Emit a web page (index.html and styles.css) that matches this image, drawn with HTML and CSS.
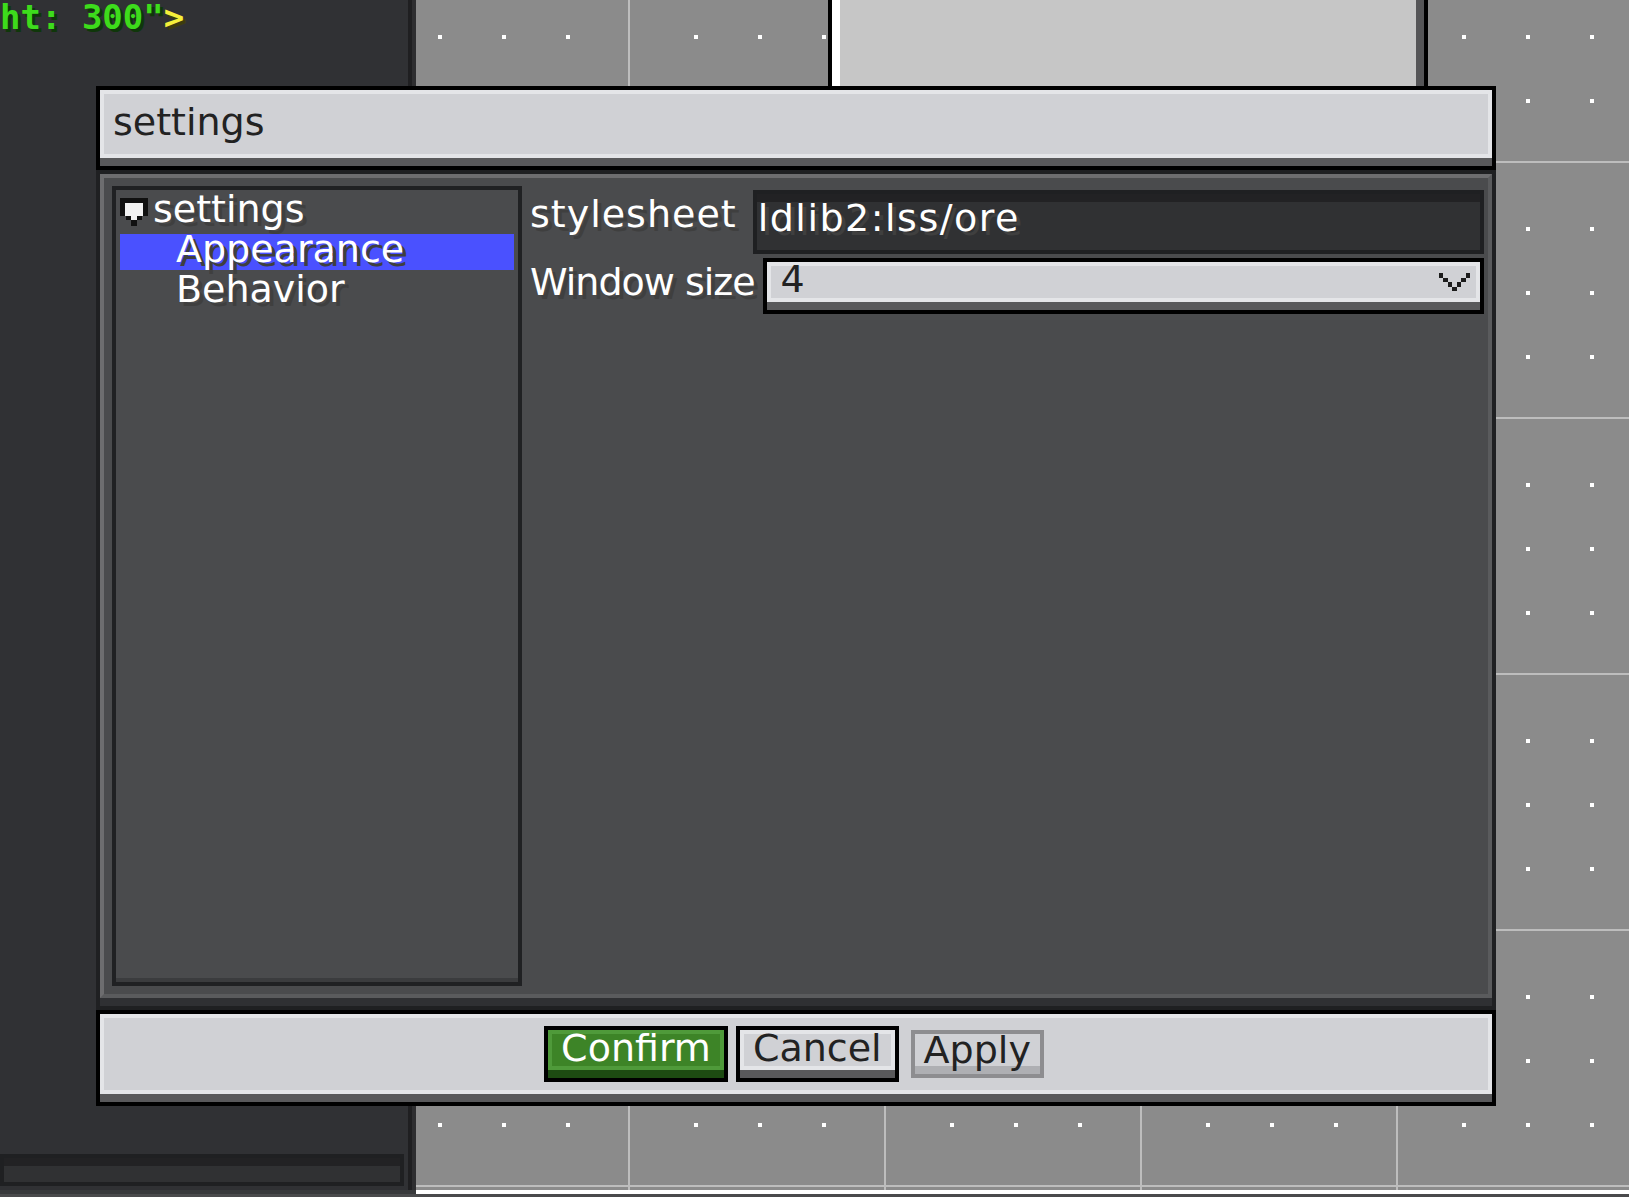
FILE: index.html
```html
<!DOCTYPE html>
<html lang="en">
  <head>
    <meta charset="UTF-8" />
    <meta name="viewport" content="width=device-width, initial-scale=1.0" />
    <title>settings</title>
    <link rel="stylesheet" href="styles.css">
  </head>
  <body>
    <div class="app">
      <div class="main">
        <div class="editor">
          <div class="code-line"><span class="code-str">ht: 300"</span><span class="code-tag">&gt;</span></div>
          <div class="field editor-input"></div>
        </div>
        <div class="canvas">
          <div class="canvas-panel"></div>
        </div>
      </div>
      <div class="status">
        <div class="status-left"></div>
        <div class="status-right"></div>
      </div>

      <div class="dialog">
        <div class="raised dialog-title">
          <div class="face">settings</div>
        </div>

        <div class="dialog-body">
          <div class="body-face">
            <div class="tree">
              <div class="tree-row">
                <svg class="toggle" width="28" height="28" viewBox="0 0 28 28" shape-rendering="crispEdges">
                  <rect x="0" y="0" width="28" height="18" fill="#111" />
                  <rect x="5" y="5" width="18" height="13" fill="#f2f2f2" />
                  <rect x="6" y="18" width="16" height="4" fill="#111" />
                  <rect x="11" y="18" width="6" height="4" fill="#f2f2f2" />
                  <rect x="11" y="22" width="6" height="6" fill="#111" />
                </svg>
                <span class="label">settings</span>
              </div>
              <div class="tree-row child selected"><span class="label">Appearance</span></div>
              <div class="tree-row child"><span class="label">Behavior</span></div>
            </div>

            <div class="props">
              <div class="prop-row">
                <span class="label prop-label">stylesheet</span>
                <div class="field prop-field">ldlib2:lss/ore</div>
              </div>
              <div class="prop-row">
                <span class="label prop-label narrow">Window size</span>
                <div class="raised select">
                  <div class="face">
                    <span>4</span>
                    <svg class="chevron" width="31" height="18" viewBox="0 0 7 4" preserveAspectRatio="none" shape-rendering="crispEdges">
                      <rect x="0" y="0" width="1" height="1" fill="#1c1c1c" />
                      <rect x="6" y="0" width="1" height="1" fill="#1c1c1c" />
                      <rect x="1" y="1" width="1" height="1" fill="#1c1c1c" />
                      <rect x="5" y="1" width="1" height="1" fill="#1c1c1c" />
                      <rect x="2" y="2" width="1" height="1" fill="#1c1c1c" />
                      <rect x="4" y="2" width="1" height="1" fill="#1c1c1c" />
                      <rect x="3" y="3" width="1" height="1" fill="#1c1c1c" />
                    </svg>
                  </div>
                </div>
              </div>
            </div>
          </div>
        </div>

        <div class="raised dialog-footer">
          <div class="face">
            <div class="btn btn-confirm"><div class="btn-face">Confirm</div></div>
            <div class="btn"><div class="btn-face">Cancel</div></div>
            <div class="btn btn-disabled"><div class="btn-face">Apply</div></div>
          </div>
        </div>
      </div>
    </div>
  </body>
</html>
```

FILE: styles.css
```css
* {
  box-sizing: border-box;
}
body {
  margin: 0;
  width: 1629px;
  height: 1197px;
  overflow: hidden;
  background-color: #303134;
  font-family: "DejaVu Sans", sans-serif;
}
.app {
  position: relative;
  display: flex;
  flex-direction: column;
  height: 1197px;
}
.main {
  display: flex;
  height: 1190px;
}

/* code editor on the left */
.editor {
  width: 416px;
  display: flex;
  flex-direction: column;
  justify-content: space-between;
  background-color: #303134;
  border-right: 4px solid #2e2e30;
  box-shadow: inset -4px 0 #1f1f21;
}
.code-line {
  font-family: "DejaVu Sans Mono", monospace;
  font-weight: bold;
  font-size: 34px;
  line-height: 34px;
  white-space: pre;
}
.code-str {
  color: #3ddc1c;
  text-shadow: 3px 3px 0 #0f370a;
}
.code-tag {
  color: #f5f03a;
  text-shadow: 3px 3px 0 #3d3c0e;
}
.editor-input {
  height: 32px;
  margin: 0 8px 4px 0;
}

/* grid canvas */
.canvas {
  flex: 1;
  position: relative;
  background-color: #8b8b8b;
  background-image:
    linear-gradient(90deg, #bdbdbd 2px, transparent 0),
    linear-gradient(180deg, #bdbdbd 2px, transparent 0),
    linear-gradient(90deg, #8b8b8b 8px, transparent 0),
    linear-gradient(180deg, #8b8b8b 8px, transparent 0),
    conic-gradient(from 270deg at 4px 4px, #fff 25%, transparent 0);
  background-size: 256px 256px, 256px 256px, 256px 256px, 256px 256px, 64px 64px;
  background-position: 212px 0, 0 161px, 212px 0, 0 161px, 22px 35px;
}
.canvas-panel {
  position: absolute;
  left: 412px;
  top: -20px;
  width: 600px;
  height: 500px;
  border: 4px solid #000;
  background-color: #c6c6c6;
  box-shadow: inset 8px 0 #fff, inset -8px 0 #555557;
}
.status {
  display: flex;
  height: 7px;
  background-color: #4a4a4c;
}
.status-left {
  width: 416px;
  height: 4px;
  background-color: #38393b;
}
.status-right {
  flex: 1;
  height: 4px;
  background-color: #fff;
}

/* shared widgets */
.raised {
  border: 4px solid #000;
  background-color: #59595b;
  padding-bottom: 8px;
}
.raised > .face {
  height: 100%;
  border: 4px solid #e4e5e8;
  background-color: #d0d1d5;
  color: #222;
}
.field {
  border: 4px solid #1f2022;
  background-color: #303133;
  box-shadow: inset 0 8px #222224;
}
.label {
  color: #fff;
  text-shadow: 4px 4px 0 #3f3f3f;
  white-space: pre;
}

/* dialog */
.dialog {
  position: absolute;
  left: 96px;
  top: 86px;
  width: 1400px;
  display: flex;
  flex-direction: column;
  font-size: 38px;
}
.dialog-title {
  height: 84px;
}
.dialog-title > .face {
  padding-left: 9px;
  line-height: 56px;
}
.dialog-body {
  height: 840px;
  border: 4px solid #1f2022;
  background-color: #2f3033;
  padding-bottom: 8px;
}
.body-face {
  display: flex;
  height: 100%;
  border: 4px solid;
  border-color: #6d6d6f #5a5b5d #5a5b5d #6d6d6f;
  background-color: #4a4b4d;
  padding: 8px 0 8px 8px;
}
.tree {
  width: 410px;
  height: 100%;
  border: 4px solid #202123;
  padding: 4px;
  box-shadow: inset 0 -4px #3b3c3e;
}
.tree-row {
  display: flex;
  align-items: flex-start;
  gap: 5px;
  height: 36px;
  margin-bottom: 4px;
  line-height: 30px;
}
.tree-row.child {
  padding-left: 56px;
}
.tree-row.selected {
  background-color: #4a51ff;
}
.toggle {
  margin-top: 4px;
  flex: none;
}
.props {
  flex: 1;
  display: flex;
  flex-direction: column;
  gap: 4px;
  padding: 4px 4px 0 8px;
}
.prop-row {
  display: flex;
  align-items: flex-start;
  gap: 8px;
}
.prop-label {
  line-height: 48px;
  letter-spacing: 1px;
}
.prop-label.narrow {
  letter-spacing: -1px;
}
.prop-field {
  flex: 1;
  height: 64px;
  margin-left: 8px;
  padding-left: 1px;
  color: #fff;
  text-shadow: 4px 4px 0 #3f3f3f;
  line-height: 48px;
  letter-spacing: 1.5px;
}
.select {
  flex: 1;
  height: 56px;
}
.select > .face {
  display: flex;
  justify-content: space-between;
  align-items: flex-start;
  padding: 0 6px 0 10px;
  line-height: 26px;
}
.chevron {
  margin-top: 7px;
}

/* footer buttons */
.dialog-footer {
  height: 96px;
}
.dialog-footer > .face {
  display: flex;
  justify-content: center;
  align-items: center;
  gap: 8px;
}
.btn {
  border: 4px solid #000;
  background-color: #59595b;
  padding-bottom: 8px;
}
.btn-face {
  height: 40px;
  padding: 0 9px;
  border: 4px solid #e4e5e8;
  background-color: #d0d1d5;
  color: #222;
  line-height: 28px;
}
.btn-confirm {
  background-color: #1d4b12;
}
.btn-confirm .btn-face {
  border-color: #4f9a3a;
  background-color: #3d8427;
  color: #fff;
}
.btn-disabled {
  margin: 4px;
  border-color: #8d8d90;
  background-color: #aeafb3;
}
.btn-disabled .btn-face {
  height: 32px;
  border: none;
  padding: 0 9px;
  line-height: 32px;
}
```
